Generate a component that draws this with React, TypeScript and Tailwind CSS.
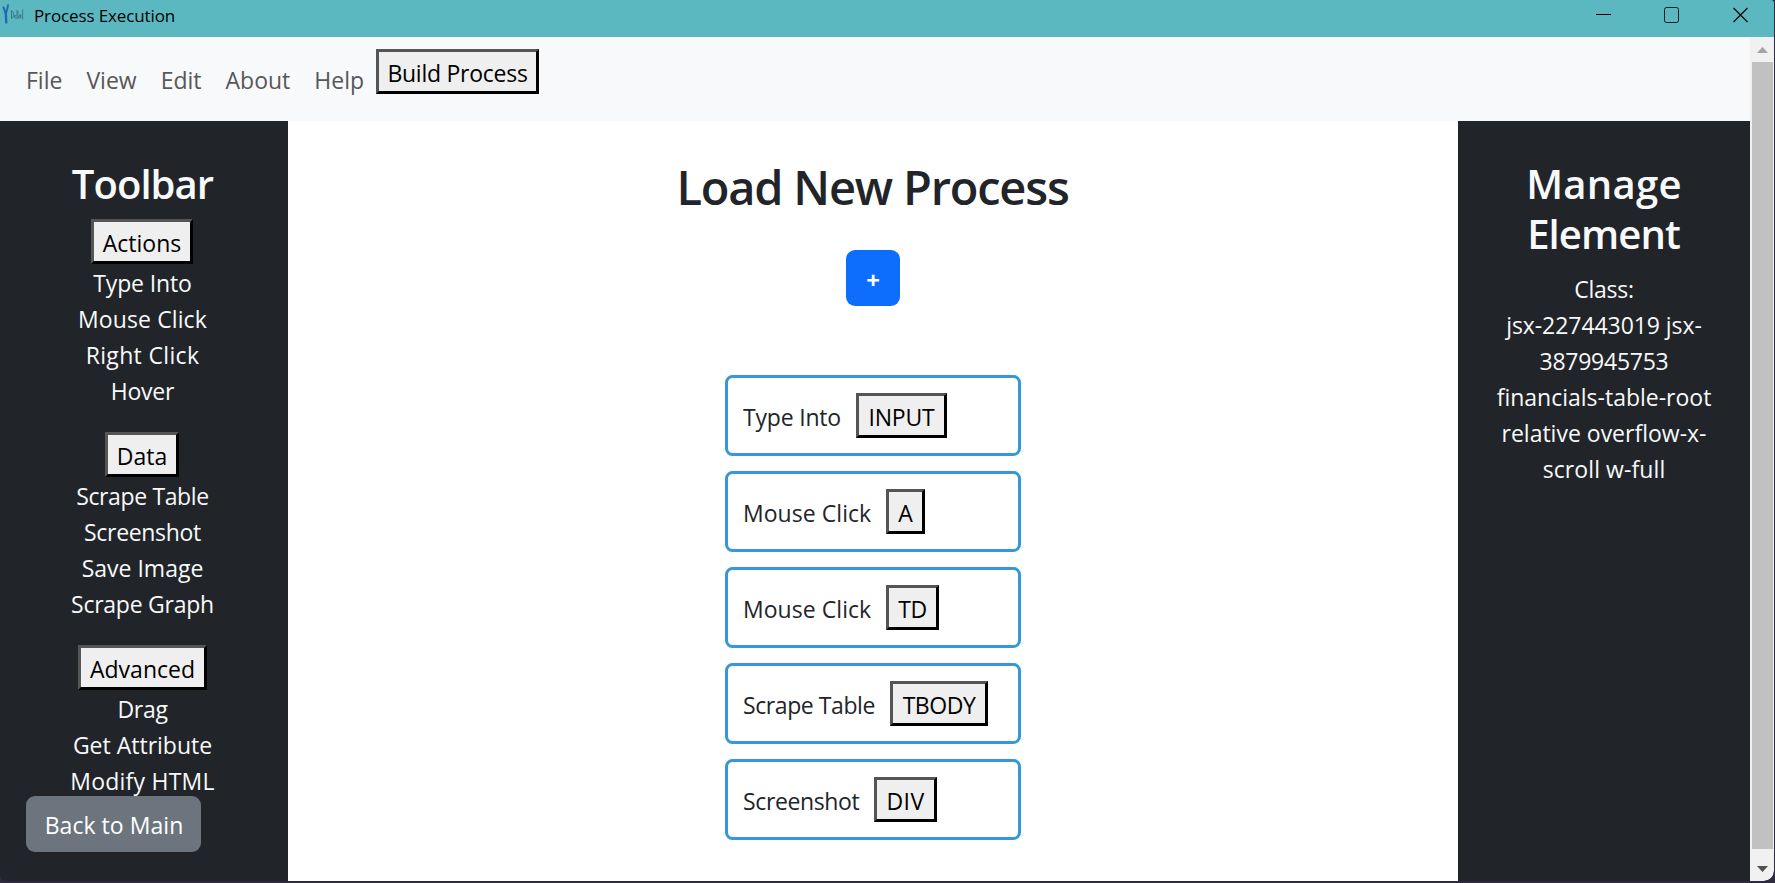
import type { ReactNode } from "react";

type Group = { title: string; width: string; items: { label: string; track: string }[] };

const groups: Group[] = [
  {
    title: "Actions",
    width: "w-[102px] mr-px",
    items: [
      { label: "Type Into", track: "tracking-[-0.15px]" },
      { label: "Mouse Click", track: "tracking-[0.11px]" },
      { label: "Right Click", track: "tracking-[0.34px]" },
      { label: "Hover", track: "tracking-[-0.22px]" },
    ],
  },
  {
    title: "Data",
    width: "w-[74px] mr-px",
    items: [
      { label: "Scrape Table", track: "tracking-[-0.37px]" },
      { label: "Screenshot", track: "tracking-[-0.32px]" },
      { label: "Save Image", track: "tracking-normal" },
      { label: "Scrape Graph", track: "tracking-[-0.25px]" },
    ],
  },
  {
    title: "Advanced",
    width: "w-[129px]",
    items: [
      { label: "Drag", track: "tracking-[-0.29px]" },
      { label: "Get Attribute", track: "tracking-normal" },
      { label: "Modify HTML", track: "tracking-[0.24px]" },
    ],
  },
];

const steps = [
  { action: "Type Into", label: "w-[113px] tracking-[-0.2px]", tag: "INPUT", button: "w-[91px] tracking-[-0.16px]" },
  { action: "Mouse Click", label: "w-[143px] tracking-[0.05px]", tag: "A", button: "w-[39px]" },
  { action: "Mouse Click", label: "w-[143px] tracking-[0.05px]", tag: "TD", button: "w-[53px] tracking-[-0.5px]" },
  { action: "Scrape Table", label: "w-[147px] tracking-[-0.42px]", tag: "TBODY", button: "w-[98px] tracking-[-0.45px]" },
  { action: "Screenshot", label: "w-[131px] tracking-[-0.37px]", tag: "DIV", button: "w-[63px] tracking-[0.4px]" },
];

const classLines = [
  { text: "Class:", track: "tracking-[-0.26px]" },
  { text: "jsx-227443019 jsx-", track: "tracking-[-0.06px]" },
  { text: "3879945753", track: "tracking-[-0.26px]" },
  { text: "financials-table-root", track: "tracking-normal" },
  { text: "relative overflow-x-", track: "tracking-normal" },
  { text: "scroll w-full", track: "tracking-[0.09px]" },
];

function RaisedButton({ className, children }: { className: string; children: ReactNode }) {
  return (
    <button
      className={`flex h-[45px] shrink-0 justify-center whitespace-nowrap border-[3px] border-b-black border-l-[#555] border-r-black border-t-[#555] bg-[#efefef] pt-[3px] leading-[36px] text-black ${className}`}
    >
      {children}
    </button>
  );
}

function Logo() {
  return (
    <svg width="24" height="28" viewBox="0 0 24 28" fill="none">
      <path d="M3.2 6.500 L5.800 14 L8 6" stroke="#1f6aa8" strokeWidth="1.900" />
      <path d="M5.800 12.500 L6.300 23.500" stroke="#1f6aa8" strokeWidth="2.300" />
      <circle cx="8" cy="5.200" r="1.100" fill="#2a74b0" />
      <path
        d="M11.500 10v8.500c2.500 0 3-7-.3-8M14.500 17c1.500-1 1-3 .2-1.500s.2 3.500 1.500 2M17 10v9c2-.5 2-4 .3-4M17 10.500c1.500.5 1.500 3 0 4M19.500 14.500c-1 4 1 4.500 1.300 0v4M22.700 9.500v10"
        stroke="#3b7d88"
        strokeWidth="1"
      />
    </svg>
  );
}

function TitleBar() {
  return (
    <header className="flex h-[37px] shrink-0 items-start justify-between bg-[#5bb8c1]">
      <div className="flex">
        <Logo />
        <span className="pl-[10px] pt-[4px] text-[17px] leading-[24px] tracking-[-0.12px] text-black">
          Process Execution
        </span>
      </div>
      <div className="flex gap-[53px] pr-[26px] pt-[7px]">
        <svg width="15" height="16" viewBox="0 0 15 16" className="-ml-px mr-px">
          <path d="M0 7.500h15" stroke="#000" />
        </svg>
        <svg width="15" height="16" viewBox="0 0 15 16" fill="none" className="-ml-px mr-px">
          <rect x=".5" y=".5" width="14" height="15" rx="2" stroke="#0b2023" />
        </svg>
        <svg width="15" height="16" viewBox="0 0 15 16">
          <path d="M.5 1 L14.500 15 M14.500 1 L.5 15" stroke="#000" strokeWidth="1.1" />
        </svg>
      </div>
    </header>
  );
}

function MenuBar() {
  return (
    <nav className="flex h-[84px] shrink-0 items-start bg-[#f8f9fa] pl-[14px] pt-[12px]">
      {["File", "View", "Edit", "About", "Help"].map((item) => (
        <a key={item} className="px-3 pt-[13px] leading-[36px] text-[#575758]">
          {item}
        </a>
      ))}
      <RaisedButton className="-ml-[0.5px] w-[163px] pl-px tracking-[-0.25px]">Build Process</RaisedButton>
    </nav>
  );
}

function Toolbar() {
  return (
    <aside className="relative flex w-[288px] shrink-0 flex-col items-center bg-[#212529] pr-[3px] pt-[36px] text-[#f8f9fa]">
      <h2 className="h-[50px] text-[40px] font-semibold leading-[53px] tracking-[-0.95px]">Toolbar</h2>
      <div className="flex flex-col gap-6 pt-3">
        {groups.map((g) => (
          <section key={g.title} className="flex flex-col items-center">
            <RaisedButton className={g.width}>{g.title}</RaisedButton>
            {g.items.map((i) => (
              <span key={i.label} className={`h-9 whitespace-nowrap leading-[38px] ${i.track}`}>
                {i.label}
              </span>
            ))}
          </section>
        ))}
      </div>
      <button className="absolute bottom-[29px] left-[26px] flex h-[56px] w-[175px] justify-center rounded-[9px] bg-[#6c757d] pl-px pt-[11px] leading-[36px] tracking-[0.05px] text-white">
        Back to Main
      </button>
    </aside>
  );
}

function Process() {
  return (
    <main className="flex flex-1 flex-col items-center bg-white pt-[36px] text-[#212529]">
      <h1 className="h-[58px] pr-[1px] text-[47px] font-semibold leading-[60px] tracking-[-1.2px]">
        Load New Process
      </h1>
      <button className="mt-[35px] flex h-[56px] w-[54px] items-center justify-center rounded-[9px] bg-[#0d6efd] pt-[4px] text-[24px] font-bold leading-[36px] text-white">
        +
      </button>
      <div className="mt-[69px] flex flex-col gap-[15px]">
        {steps.map((s, i) => (
          <div key={i} className="flex h-[81px] w-[296px] rounded-[7.5px] border-[3px] border-[#3498db] p-[15px]">
            <span className={`shrink-0 whitespace-nowrap pt-[6px] leading-[36px] ${s.label}`}>{s.action}</span>
            <RaisedButton className={s.button}>{s.tag}</RaisedButton>
          </div>
        ))}
      </div>
    </main>
  );
}

function ManageElement() {
  return (
    <aside className="flex w-[292px] shrink-0 flex-col items-center bg-[#212529] pt-[36px] text-center text-[#f8f9fa]">
      <h2 className="flex flex-col text-[40px] font-semibold">
        <span className="h-[50px] leading-[53px] tracking-[0.3px]">Manage</span>
        <span className="h-[50px] pr-[1px] leading-[53px] tracking-[-0.9px]">Element</span>
      </h2>
      <div className="flex flex-col pt-[13px]">
        {classLines.map((l) => (
          <span key={l.text} className={`h-9 whitespace-nowrap leading-[38px] ${l.track}`}>
            {l.text}
          </span>
        ))}
      </div>
    </aside>
  );
}

function ScrollBar() {
  return (
    <div className="flex w-6 shrink-0 flex-col items-center rounded-br-[10px] bg-[#f1f1f1]">
      <svg className="shrink-0" width="24" height="25" viewBox="0 0 24 25">
        <path d="M12.500 10 L18 16 H7z" fill="#a3a3a3" />
      </svg>
      <div className="ml-[1px] w-[21px] flex-1 bg-[#c1c1c1]" />
      <svg className="shrink-0" width="24" height="32" viewBox="0 0 24 32">
        <path d="M12.500 23 L18 17 H7z" fill="#505050" />
      </svg>
    </div>
  );
}

export default function App() {
  return (
    <div className="h-[883px] w-[1775px] overflow-hidden bg-[#2f2b3f] pb-[2px] pr-px font-['Open_Sans','Noto_Sans',sans-serif] text-[23px]">
      <div className="flex h-full flex-col overflow-hidden rounded-bl-[6px] rounded-br-[10px] rounded-tr-[3px]">
        <TitleBar />
        <div className="flex min-h-0 flex-1">
          <div className="flex min-w-0 flex-1 flex-col">
            <MenuBar />
            <div className="flex min-h-0 flex-1">
              <Toolbar />
              <Process />
              <ManageElement />
            </div>
          </div>
          <ScrollBar />
        </div>
      </div>
    </div>
  );
}
